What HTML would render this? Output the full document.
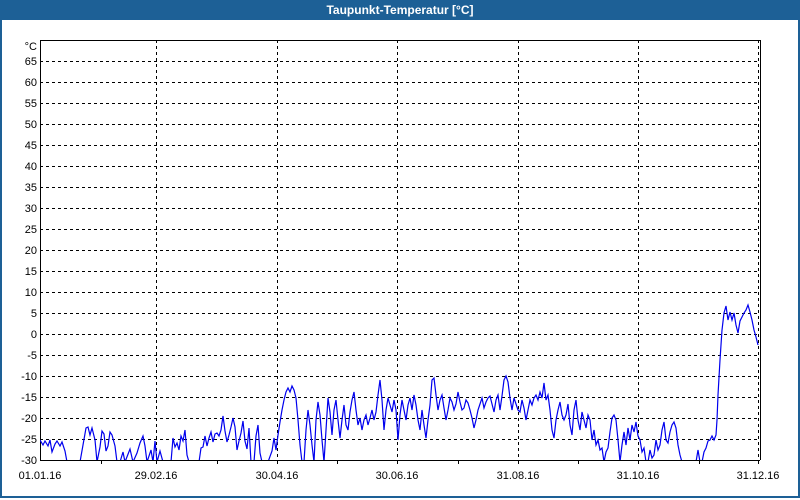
<!DOCTYPE html>
<html><head><meta charset="utf-8"><style>
html,body{margin:0;padding:0;width:800px;height:500px;overflow:hidden;background:#fff;}
#t{position:absolute;left:0;top:0;width:800px;height:20px;background:#1d6096;color:#fff;font:bold 12px "Liberation Sans",sans-serif;text-align:center;line-height:20px;}
#b{position:absolute;left:0;top:20px;width:796px;height:476px;border:2px solid #1d6096;border-top:none;}
</style></head><body>
<div id="t">Taupunkt-Temperatur [°C]</div>
<div id="b"></div>
<svg width="800" height="500" style="position:absolute;left:0;top:0" font-family="Liberation Sans, sans-serif" font-size="11">
<defs><clipPath id="c"><rect x="40" y="40" width="720" height="420"/></clipPath></defs>
<g stroke="#000" stroke-dasharray="3,3" stroke-width="1">
<path d="M40 61.5H760M40 82.5H760M40 103.5H760M40 124.5H760M40 145.5H760M40 166.5H760M40 187.5H760M40 208.5H760M40 229.5H760M40 250.5H760M40 271.5H760M40 292.5H760M40 313.5H760M40 334.5H760M40 355.5H760M40 376.5H760M40 397.5H760M40 418.5H760M40 439.5H760"/>
<path d="M156.5 40V460M277.5 40V460M397.5 40V460M518.5 40V460M638.5 40V460M758.5 40V460"/>
</g>
<path d="M40.5 40V460.5H760M40 40.5H760M760.5 40V460" stroke="#000" fill="none"/>
<path d="M101.5 460v4M156.5 460v4M217.5 460v4M277.5 460v4M337.5 460v4M397.5 460v4M458.5 460v4M518.5 460v4M578.5 460v4M638.5 460v4M699.5 460v4M758.5 460v4" stroke="#000"/>
<g text-anchor="end" fill="#000">
<text x="37" y="50">°C</text><text x="37" y="65">65</text><text x="37" y="86">60</text><text x="37" y="107">55</text><text x="37" y="128">50</text><text x="37" y="149">45</text><text x="37" y="170">40</text><text x="37" y="191">35</text><text x="37" y="212">30</text><text x="37" y="233">25</text><text x="37" y="254">20</text><text x="37" y="275">15</text><text x="37" y="296">10</text><text x="37" y="317">5</text><text x="37" y="338">0</text><text x="37" y="359">-5</text><text x="37" y="380">-10</text><text x="37" y="401">-15</text><text x="37" y="422">-20</text><text x="37" y="443">-25</text><text x="37" y="464">-30</text>
</g>
<g text-anchor="middle" fill="#000">
<text x="40" y="479">01.01.16</text><text x="156" y="479">29.02.16</text><text x="277" y="479">30.04.16</text><text x="397" y="479">30.06.16</text><text x="518" y="479">31.08.16</text><text x="638" y="479">31.10.16</text><text x="758" y="479">31.12.16</text>
</g>
<polyline clip-path="url(#c)" fill="none" stroke="#0000ee" stroke-width="1.2" points="40,440 43,445 45,441 48,446 50,440 52,452 55,444 57,441 60,446 62,442 65,451 67,462 80,462 83,445 86,428 88,427 90,435 92,428 95,440 97,462 100,447 102,431 104,434 106,451 108,446 110,432 112,435 115,446 117,462 120,462 123,452 125,462 130,449 133,462 137,453 140,443 143,436 145,446 147,462 151,450 153,462 155,441 157,462 160,451 163,462 171,462 173,438 175,447 177,443 179,450 181,436 183,441 185,430 187,455 189,462 199,462 201,448 203,447 205,436 207,446 209,438 211,432 213,442 215,434 217,433 219,436 221,430 223,416 225,431 227,442 229,435 231,427 233,418 235,427 237,450 239,441 241,433 243,421 245,441 247,449 249,428 251,462 254,462 256,436 258,425 260,453 262,462 268,462 272,451 274,438 276,450 278,435 280,422 282,410 284,400 286,392 288,388 290,392 292,386 294,390 296,398 298,420 300,445 302,462 304,462 306,430 308,410 310,425 312,445 314,462 316,420 318,402 320,415 322,440 324,462 326,430 328,398 330,412 332,435 334,410 336,400 338,420 340,438 342,420 344,405 346,425 348,430 350,412 352,400 354,392 356,410 358,425 360,418 362,430 364,420 366,415 368,425 370,418 372,410 374,420 376,412 378,395 380,380 382,400 384,430 386,410 388,398 390,405 392,412 394,400 396,410 398,440 400,415 402,400 404,410 406,420 408,405 410,398 412,410 414,395 416,405 418,420 420,430 422,410 424,425 426,438 428,420 430,405 432,380 434,378 436,395 438,410 440,400 442,395 444,408 446,420 448,410 450,398 452,402 454,410 456,404 458,392 460,402 462,410 464,408 466,400 468,403 470,410 472,418 474,428 476,420 478,410 480,404 482,398 484,408 486,402 488,398 490,396 492,404 494,412 496,400 498,395 500,410 502,396 504,380 506,376 508,382 510,398 512,410 514,398 516,404 518,410 520,412 522,400 524,408 526,420 528,410 530,400 532,405 534,398 536,395 538,400 540,392 542,398 544,383 546,400 548,395 550,410 552,430 554,438 556,420 558,410 560,402 562,415 564,420 566,415 568,404 570,425 572,435 574,410 576,400 578,420 580,430 582,412 584,420 586,428 588,415 590,420 592,440 594,430 596,445 598,440 600,450 602,448 604,462 606,452 608,448 610,432 612,418 614,415 616,420 618,440 620,462 622,445 624,432 626,445 628,428 630,440 632,425 634,432 636,422 638,436 640,440 642,452 644,448 646,462 648,462 650,450 652,458 654,455 656,440 658,450 660,445 662,430 664,422 666,440 668,443 670,432 672,425 674,422 676,428 678,445 680,455 682,462 696,462 698,450 700,462 702,462 704,452 706,448 708,441 710,440 712,436 714,440 716,435 717,420 718,395 720,360 722,330 724,313 726,306 728,320 730,312 732,320 734,313 736,325 738,333 740,321 742,317 744,313 746,310 748,305 750,312 752,320 754,330 756,337 758,345"/>
</svg>
</body></html>
